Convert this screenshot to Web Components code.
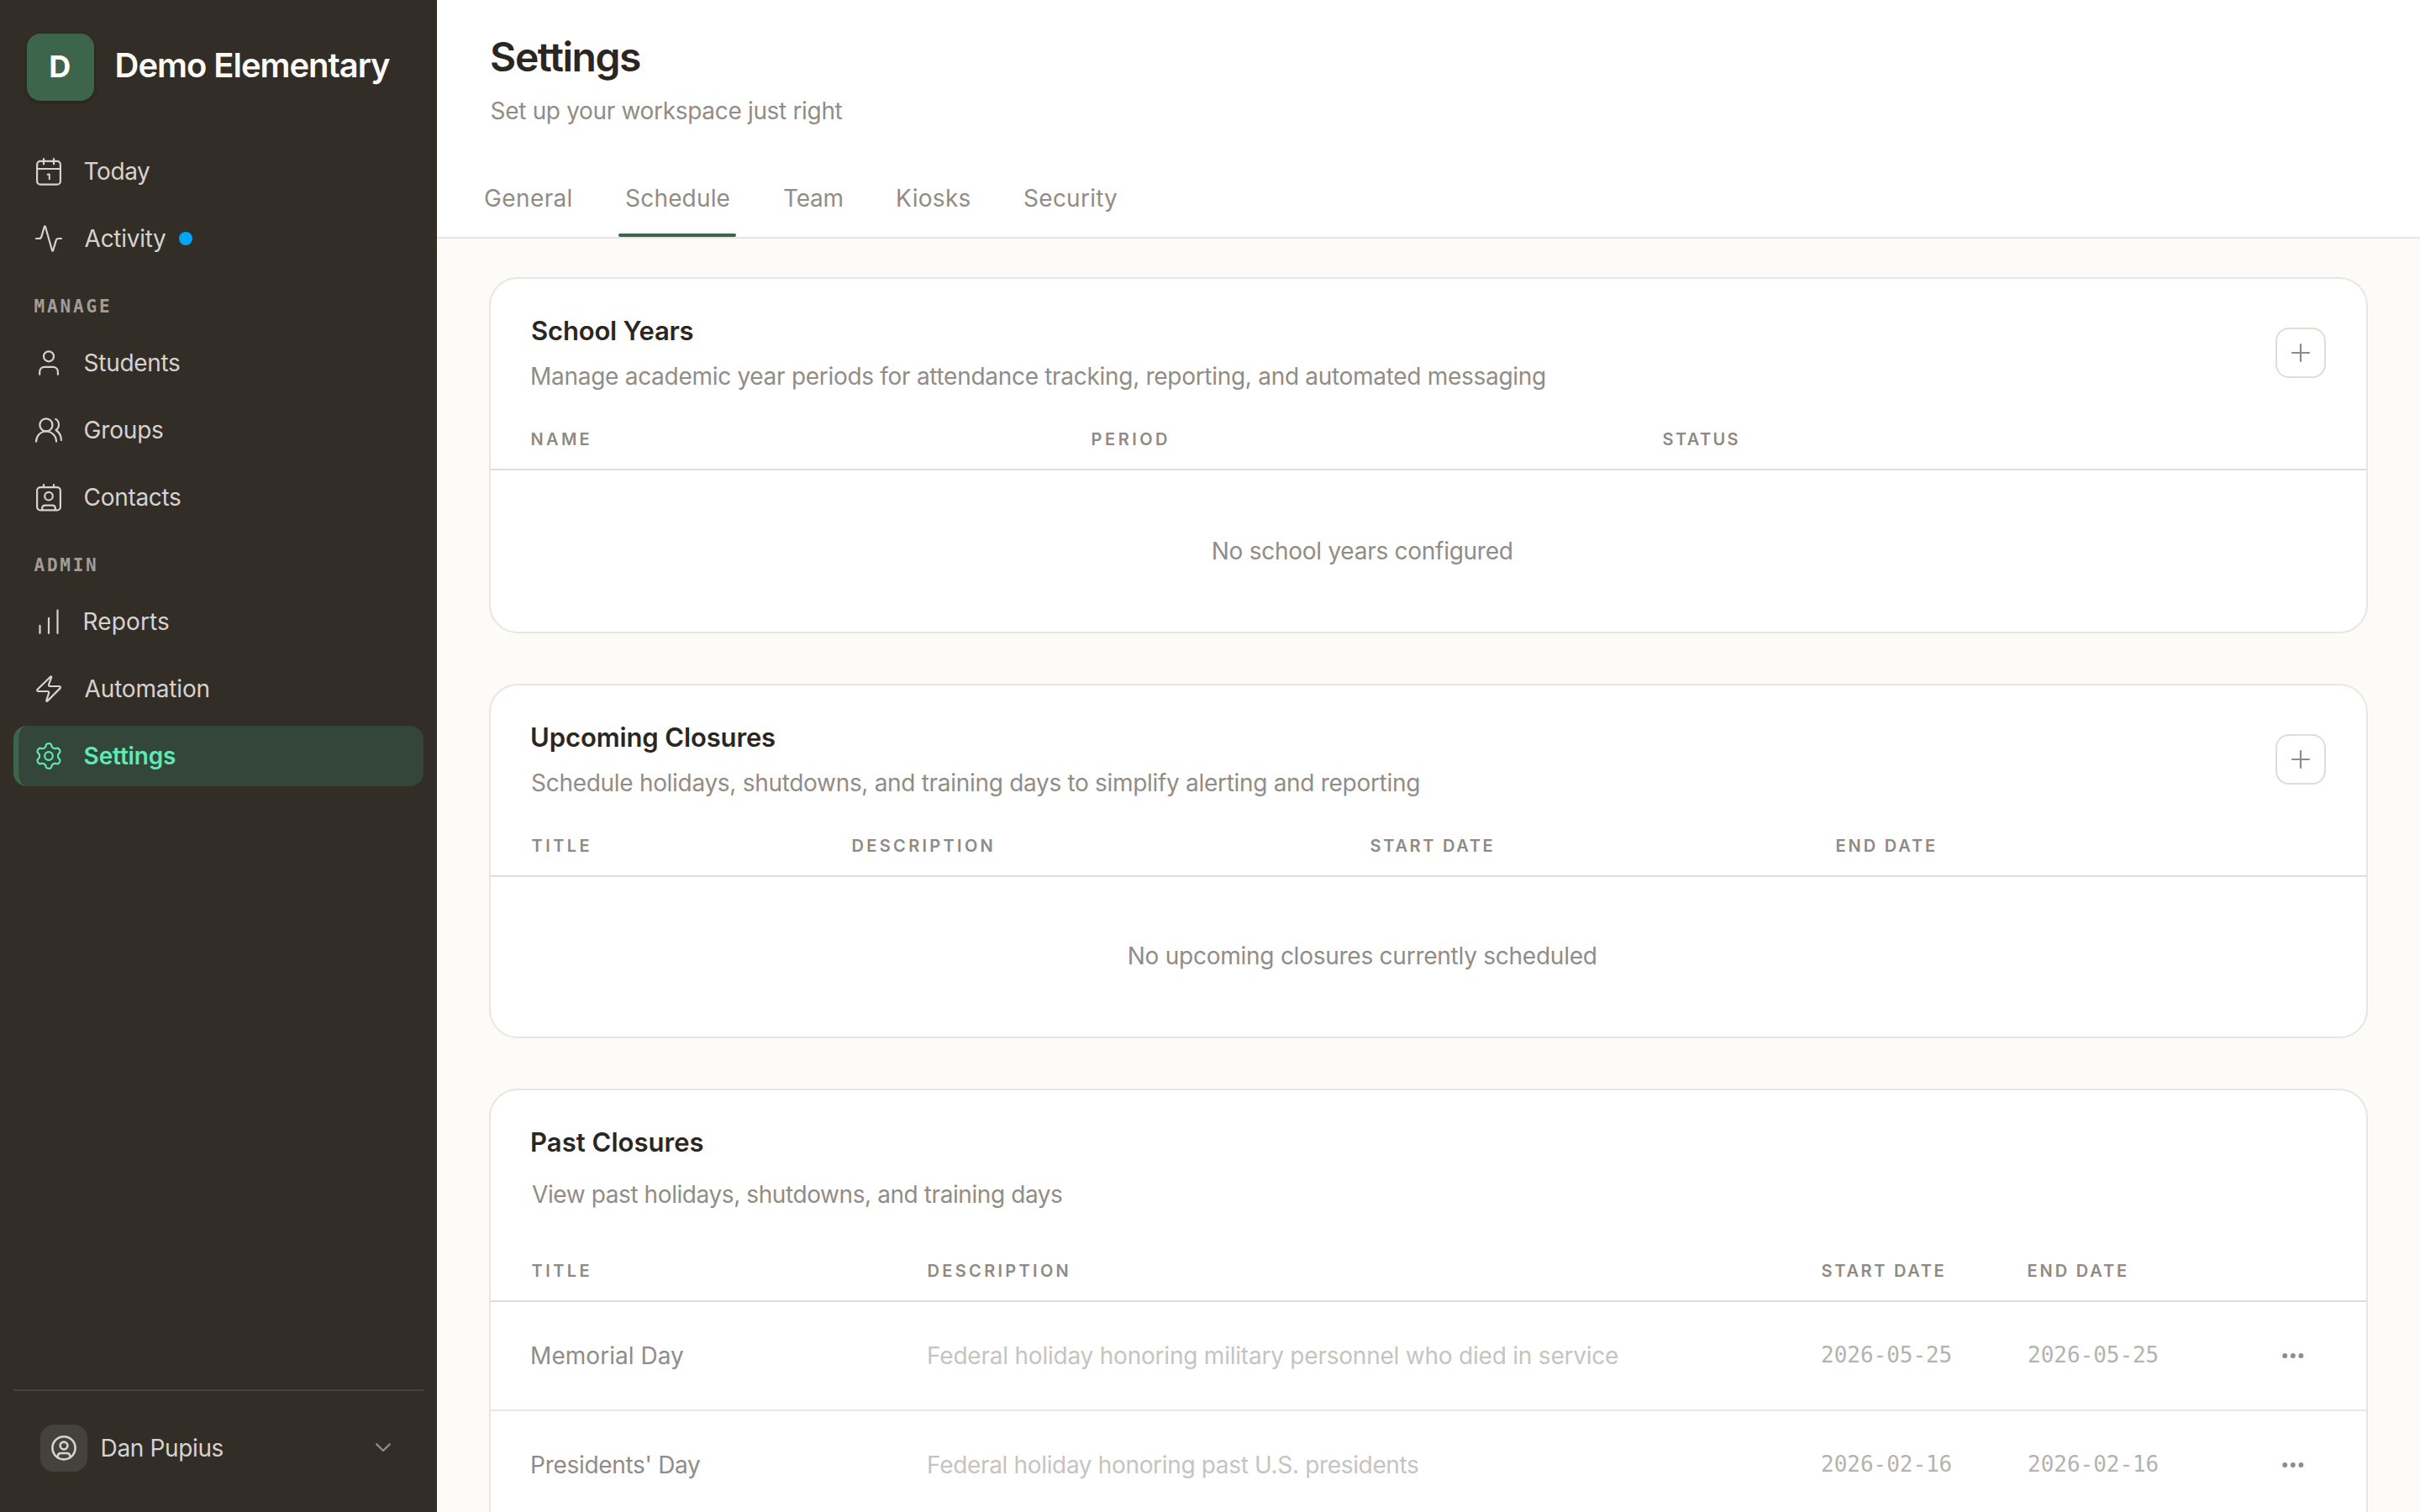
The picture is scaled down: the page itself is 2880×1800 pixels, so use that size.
<!DOCTYPE html>
<html lang="en">
<head>
<meta charset="utf-8">
<title>Settings</title>
<style>
html,body{margin:0;height:100%}
body{background:#fcfbf7;font-family:Inter,"Liberation Sans",sans-serif;overflow:hidden}
</style>
</head>
<body>
<app-shell></app-shell>
<script>
const define=(name,html,after)=>customElements.define(name,class extends HTMLElement{
  connectedCallback(){
    if(this.shadowRoot)return;
    const root=this.attachShadow({mode:'open'});
    const t=document.createElement('template');
    t.innerHTML=typeof html==='function'?html(this):html;
    root.append(t.content.cloneNode(true));
    if(after)after(this,root);
  }
});

/* A single line of text tracked so that its ink spans the width given in "w". */
const ctx=document.createElement('canvas').getContext('2d');
define('fit-text','<style>:host{display:block;white-space:pre;line-height:40px}span{display:inline-block}</style><span><slot></slot></span>',(el,root)=>{
  const cs=getComputedStyle(el),text=el.textContent,w=+el.getAttribute('w');
  ctx.font=`${cs.fontWeight} ${cs.fontSize} ${cs.fontFamily}`;
  const m=ctx.measureText(text),span=root.querySelector('span');
  const ls=text.length>1?(w-m.actualBoundingBoxLeft-m.actualBoundingBoxRight)/(text.length-1):0;
  span.style.letterSpacing=ls.toFixed(3)+'px';
  span.style.marginLeft=(m.actualBoundingBoxLeft+.6).toFixed(2)+'px';
  span.style.marginRight=(-ls).toFixed(3)+'px';
});

const gear=()=>{
  let d='';
  for(let i=0;i<180;i++){
    const a=i*Math.PI/90,r=12.9+1.9*Math.tanh(1.7*Math.cos(6*a))/Math.tanh(1.7);
    d+=(i?'L':'M')+(18+r*Math.sin(a)).toFixed(2)+' '+(18-r*Math.cos(a)).toFixed(2);
  }
  return d+'Z';
};
const icons={
  today:'<rect x="4.1" y="5.9" width="27.8" height="27.8" rx="4"/><path d="M4 15H32M12 3V9.3M24 3V9.3"/><path d="M16.6 21.8L18.8 21.4V27.2" stroke-width="2"/>',
  activity:'<path d="M3 18H6.6C8 18 8.9 17.2 9.3 15.9L12.8 4Q13.4 2.6 14 4L22 32Q22.6 33.4 23.2 32L26.7 20.1C27.1 18.8 28 18 29.4 18H33"/>',
  student:'<circle cx="18" cy="10.3" r="6"/><path d="M7.2 31.8V28.6C7.2 25.2 9.7 22.8 13 22.8H23C26.3 22.8 28.9 25.2 28.9 28.6V31.8"/>',
  groups:'<circle cx="14.9" cy="11.9" r="7.5"/><path d="M3 31.6C3.2 25 8.3 19.5 14.9 19.5C21.5 19.5 26.9 25 27 31.6M26.3 4.9C28.6 6.2 30 8.8 30 11.8C30 14.2 28.6 16.6 26.6 18C30.3 20.6 32.8 25 32.9 29.9"/>',
  contacts:'<rect x="4.1" y="6.2" width="27.8" height="27.2" rx="4"/><path d="M12 3V6M24 3V6M10.2 33V31C10.2 28.9 11.7 27.6 13.7 27.6H22.3C24.3 27.6 25.8 28.9 25.8 31V33"/><circle cx="18" cy="16.7" r="4.8"/>',
  reports:'<path d="M7.5 22.9V31.8M18 13.9V31.8M28.5 4.7V31.8"/>',
  automation:'<path d="M20 3.8L4.6 18.8C3.7 19.7 4.2 21 5.4 21H16.6C17.7 21 18.4 21.8 18.2 22.9L15.3 31.6C15 32.9 15.8 33.2 16.6 32.4L31.5 17.4C32.3 16.4 31.9 15 30.6 15H19.6C18.5 15 17.8 14.2 18 13.1L21.1 4.6C21.6 3.3 20.8 3 20 3.8Z"/>',
  settings:`<path d="${gear()}"/><circle cx="18" cy="18" r="4.8"/>`
};
define('line-icon',el=>`<style>:host{display:block;width:36px;height:36px;flex:none}svg{display:block}</style>
<svg width="36" height="36" viewBox="0 0 36 36" fill="none" stroke="currentColor" stroke-width="2.2" stroke-linecap="round" stroke-linejoin="round">${icons[el.getAttribute('name')]}</svg>`);

define('nav-item',el=>`<style>
:host{display:flex;align-items:center;gap:24px;height:72px;box-sizing:border-box;padding-left:18px;border-left:6px solid transparent;border-radius:16px;font-size:28px;color:#d6d3cf}
:host([active]){background:#344539;border-left-color:#3c654c;color:#5ee9b5;font-weight:600}
::slotted(i){width:16px;height:16px;border-radius:50%;background:#00a6f6;margin-left:-8.5px}
</style><line-icon name="${el.getAttribute('icon')}"></line-icon><slot></slot>`);

define('nav-label',`<style>:host{display:flex;align-items:center;height:60px;box-sizing:border-box;padding:14px 0 0 24px;font:600 21px "DejaVu Sans Mono",monospace;color:#a39d97}</style><slot></slot>`);

define('side-bar',`<style>
:host{display:flex;flex-direction:column;width:520px;height:1800px;flex:none;box-sizing:border-box;background:#332d28}
.brand{display:flex;align-items:center;gap:26px;padding:40px 32px 48px}
.logo{width:80px;height:80px;border-radius:16px;background:#3c654c;display:grid;place-items:center;box-shadow:0 2px 5px #0004;color:#fff;font-size:36px;font-weight:700}
.logo fit-text{margin-bottom:2px}
.brand>fit-text{font-size:40px;font-weight:560;color:#fafaf9;margin-bottom:4px}
nav{display:flex;flex-direction:column;gap:8px;padding:0 16px;flex:1}
.user{display:flex;align-items:center;margin:0 16px;height:146px;box-sizing:border-box;border-top:2px solid #48423e;padding:0 39px 8px 32px;font-size:28px;color:#d6d3cf}
.avatar{width:56px;height:56px;border-radius:16px;background:#45413c}
.user fit-text{margin-left:17px;flex:1}
svg{display:block}
</style>
<div class="brand"><div class="logo"><fit-text w="23.5">D</fit-text></div><fit-text w="325.5">Demo Elementary</fit-text></div>
<nav>
<nav-item icon="today"><fit-text w="77.5">Today</fit-text></nav-item>
<nav-item icon="activity"><fit-text w="96.5">Activity</fit-text><i></i></nav-item>
<nav-label><fit-text w="89.5">MANAGE</fit-text></nav-label>
<nav-item icon="student"><fit-text w="113.5">Students</fit-text></nav-item>
<nav-item icon="groups"><fit-text w="93.5">Groups</fit-text></nav-item>
<nav-item icon="contacts"><fit-text w="114.5">Contacts</fit-text></nav-item>
<nav-label><fit-text w="73.5">ADMIN</fit-text></nav-label>
<nav-item icon="reports"><fit-text w="100.5">Reports</fit-text></nav-item>
<nav-item icon="automation"><fit-text w="148">Automation</fit-text></nav-item>
<nav-item icon="settings" active><fit-text w="108.5">Settings</fit-text></nav-item>
</nav>
<div class="user"><div class="avatar"><svg width="56" height="56" viewBox="0 0 56 56" fill="none" stroke="#d6d3cf" stroke-width="2.6"><circle cx="28" cy="27.8" r="13.6"/><circle cx="28" cy="25" r="4.4"/><path d="M20.6 38.6C20.6 35.6 22.2 34 24.6 34H31.4C33.8 34 35.4 35.6 35.4 38.6"/></svg></div>
<fit-text w="144">Dan Pupius</fit-text>
<svg width="18" height="12" viewBox="0 0 18 12" fill="none" stroke="#8f8a85" stroke-width="2.4" stroke-linecap="round" stroke-linejoin="round"><path d="M1.3 1.3L9 9L16.7 1.3"/></svg></div>`);

define('tab-item',el=>`<style>
:host{display:flex;flex-direction:column;justify-content:space-between;height:66px;box-sizing:border-box;font-size:28px;font-weight:440;color:#918c86}
div{padding-left:8.5px}
:host([active])::after{content:"";height:4px;border-radius:2px;background:#3c654c}
</style><div><slot></slot></div>`);

define('page-header',`<style>
:host{display:flex;flex-direction:column;height:284px;box-sizing:border-box;border-bottom:2px solid #e7e6e3;background:#fff;padding-top:40px}
.t{font-size:48px;font-weight:560;line-height:56px;color:#2b2622;margin-left:64.5px}
.s{font-size:28px;color:#918c86;margin:16px 0 0 64px}
.tabs{display:grid;grid-template-columns:120px 140px 87px 103px 126px;gap:48px;margin:64px 0 0 48px}
</style>
<fit-text class="t" w="177">Settings</fit-text>
<fit-text class="s" w="418">Set up your workspace just right</fit-text>
<div class="tabs">
<tab-item><fit-text w="102.5">General</fit-text></tab-item>
<tab-item active><fit-text w="122.5">Schedule</fit-text></tab-item>
<tab-item><fit-text w="69.5">Team</fit-text></tab-item>
<tab-item><fit-text w="86.5">Kiosks</fit-text></tab-item>
<tab-item><fit-text w="110">Security</fit-text></tab-item>
</div>`);

define('add-button',`<style>:host{display:grid;place-items:center;width:60px;height:60px;box-sizing:border-box;border:2px solid #e0ddd8;border-radius:16px}svg{display:block}</style>
<svg width="24" height="24" viewBox="0 0 24 24" stroke="#8f8a84" stroke-width="2.2" stroke-linecap="round"><path d="M2 12H22M12 2V22"/></svg>`);

define('settings-card',`<style>
:host{display:block;flex:none;box-sizing:border-box;border:2px solid #e7e6e2;border-radius:34px;background:#fff;overflow:hidden}
header{display:flex;justify-content:space-between;padding:42px 48px 0 48.5px}
.h{display:flex;flex-direction:column;gap:var(--gap,14px);padding-bottom:var(--foot,35px)}
::slotted([slot=title]){font-size:31px;font-weight:640;color:#2b2622}
::slotted([slot=desc]){font-size:28px;color:#918c86}
::slotted(add-button){margin-top:16px}
</style>
<header><div class="h"><slot name="title"></slot><slot name="desc"></slot></div><slot name="action"></slot></header><slot></slot>`);

define('table-head',el=>`<style>:host{display:grid;grid-template-columns:${el.getAttribute('cols')};padding:0 0 15px 48px;border-bottom:2px solid #e0dcd8;font-size:20px;font-weight:600;color:#8f8a84}</style><slot></slot>`);
define('empty-row',el=>`<style>:host{display:flex;justify-content:center;width:2076px;height:${el.getAttribute('h')}px;box-sizing:border-box;padding-top:${el.getAttribute('top')}px;font-size:28px;color:#918c86}</style><slot></slot>`);
define('closure-row',`<style>
:host{display:grid;grid-template-columns:472px 1063px 246px 302px 1fr;align-items:center;height:130px;box-sizing:border-box;padding-left:48.5px;border-bottom:2px solid #e7e8e3;font-size:28px;color:#c6c4c1}
::slotted(.n){font-weight:440;color:#8f8c89}
::slotted(.d){font-family:"DejaVu Sans Mono",monospace;font-size:26px;color:#b5b2af;padding-bottom:2px}
svg{display:block}
</style><slot></slot><svg width="26" height="8" fill="#8f8d8a"><circle cx="3.2" cy="4" r="3"/><circle cx="12.8" cy="4" r="3"/><circle cx="22.4" cy="4" r="3"/></svg>`);

define('app-shell',`<style>
:host{display:flex;height:1800px;overflow:hidden}
main{flex:1;display:flex;flex-direction:column;min-width:0;height:1800px;overflow:hidden}
page-header{flex:none}
.body{display:flex;flex-direction:column;gap:60px;padding:46px 62px 0}
.past{--gap:22px;--foot:51px;padding-bottom:60px}
</style>
<side-bar></side-bar>
<main><page-header></page-header>
<div class="body">
<settings-card>
<fit-text slot="title" w="191.5">School Years</fit-text>
<fit-text slot="desc" w="1205">Manage academic year periods for attendance tracking, reporting, and automated messaging</fit-text>
<add-button slot="action"></add-button>
<table-head cols="667px 679px 1fr"><fit-text w="68">NAME</fit-text><fit-text w="89.5">PERIOD</fit-text><fit-text w="90">STATUS</fit-text></table-head>
<empty-row h="192" top="76"><fit-text w="355">No school years configured</fit-text></empty-row>
</settings-card>
<settings-card>
<fit-text slot="title" w="289">Upcoming Closures</fit-text>
<fit-text slot="desc" w="1055">Schedule holidays, shutdowns, and training days to simplify alerting and reporting</fit-text>
<add-button slot="action"></add-button>
<table-head cols="382px 616px 555px 1fr"><fit-text w="68">TITLE</fit-text><fit-text w="166">DESCRIPTION</fit-text><fit-text w="145">START DATE</fit-text><fit-text w="116.5">END DATE</fit-text></table-head>
<empty-row h="190" top="74"><fit-text w="555">No upcoming closures currently scheduled</fit-text></empty-row>
</settings-card>
<settings-card class="past">
<fit-text slot="title" w="203.5">Past Closures</fit-text>
<fit-text slot="desc" w="631">View past holidays, shutdowns, and training days</fit-text>
<table-head cols="472px 1063px 246px 1fr"><fit-text w="68">TITLE</fit-text><fit-text w="166">DESCRIPTION</fit-text><fit-text w="145">START DATE</fit-text><fit-text w="116.5">END DATE</fit-text></table-head>
<closure-row><fit-text class="n" w="180">Memorial Day</fit-text><fit-text w="820">Federal holiday honoring military personnel who died in service</fit-text><fit-text class="d" w="153.5">2026-05-25</fit-text><fit-text class="d" w="153.5">2026-05-25</fit-text></closure-row>
<closure-row><fit-text class="n" w="200">Presidents' Day</fit-text><fit-text w="583">Federal holiday honoring past U.S. presidents</fit-text><fit-text class="d" w="153.5">2026-02-16</fit-text><fit-text class="d" w="153.5">2026-02-16</fit-text></closure-row>
</settings-card>
</div>
</main>`);
</script>
</body>
</html>
